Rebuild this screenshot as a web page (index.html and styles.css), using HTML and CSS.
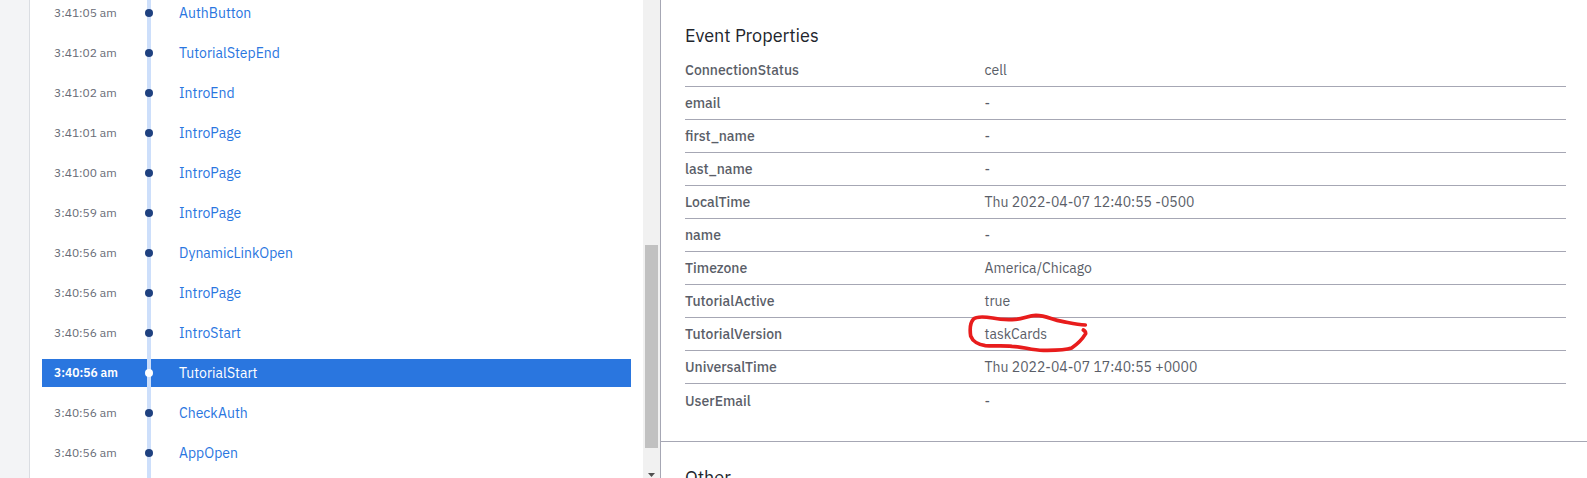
FILE: index.html
```html
<!DOCTYPE html>
<html lang="en">
<head>
<meta charset="utf-8">
<meta name="viewport" content="width=device-width, initial-scale=1">
<title>User activity</title>
<link rel="stylesheet" href="styles.css">
</head>
<body>
<div class="app">
  <div class="gutter"></div>

  <section class="stream" aria-label="Event stream">
    <ol class="events">
      <li class="event"><time class="event-time">3:41:05 am</time><span class="dot"></span><a class="event-name" href="#">AuthButton</a></li>
      <li class="event"><time class="event-time">3:41:02 am</time><span class="dot"></span><a class="event-name" href="#">TutorialStepEnd</a></li>
      <li class="event"><time class="event-time">3:41:02 am</time><span class="dot"></span><a class="event-name" href="#">IntroEnd</a></li>
      <li class="event"><time class="event-time">3:41:01 am</time><span class="dot"></span><a class="event-name" href="#">IntroPage</a></li>
      <li class="event"><time class="event-time">3:41:00 am</time><span class="dot"></span><a class="event-name" href="#">IntroPage</a></li>
      <li class="event"><time class="event-time">3:40:59 am</time><span class="dot"></span><a class="event-name" href="#">IntroPage</a></li>
      <li class="event"><time class="event-time">3:40:56 am</time><span class="dot"></span><a class="event-name" href="#">DynamicLinkOpen</a></li>
      <li class="event"><time class="event-time">3:40:56 am</time><span class="dot"></span><a class="event-name" href="#">IntroPage</a></li>
      <li class="event"><time class="event-time">3:40:56 am</time><span class="dot"></span><a class="event-name" href="#">IntroStart</a></li>
      <li class="event selected"><time class="event-time">3:40:56 am</time><span class="dot"></span><a class="event-name" href="#" aria-current="true">TutorialStart</a></li>
      <li class="event"><time class="event-time">3:40:56 am</time><span class="dot"></span><a class="event-name" href="#">CheckAuth</a></li>
      <li class="event"><time class="event-time">3:40:56 am</time><span class="dot"></span><a class="event-name" href="#">AppOpen</a></li>
    </ol>
    <div class="scrollbar" aria-hidden="true">
      <div class="track-before"></div>
      <div class="thumb"></div>
      <div class="track-after"></div>
      <svg class="arrow" viewBox="0 0 7 4"><path d="M0 0h7L3.5 4z" fill="#505050"/></svg>
    </div>
  </section>

  <main class="details">
    <section class="panel">
      <h2 class="panel-title">Event Properties</h2>
      <table class="props">
        <tbody>
          <tr><th scope="row">ConnectionStatus</th><td>cell</td></tr>
          <tr><th scope="row">email</th><td>-</td></tr>
          <tr><th scope="row">first_name</th><td>-</td></tr>
          <tr><th scope="row">last_name</th><td>-</td></tr>
          <tr><th scope="row">LocalTime</th><td>Thu 2022-04-07 12:40:55 -0500</td></tr>
          <tr><th scope="row">name</th><td>-</td></tr>
          <tr><th scope="row">Timezone</th><td>America/Chicago</td></tr>
          <tr><th scope="row">TutorialActive</th><td>true</td></tr>
          <tr><th scope="row">TutorialVersion</th><td class="marked">taskCards<svg class="scribble" viewBox="81 66 369 129" aria-hidden="true"><path d="M436 105C410 104 388 98 366 94C336 89 318 76 288 76C264 77 250 88 226 88C198 90 178 88 158 84C138 81 110 77 100 88C90 99 90 124 92 138C98 154 116 165 136 167C162 169 190 166 216 169C250 170 274 181 310 181C340 181 372 182 395 174C410 164 428 146 437 131C437 125 434 122 430 120" fill="none" stroke="#e81c1c" stroke-width="11" stroke-linecap="round" stroke-linejoin="round"/></svg></td></tr>
          <tr><th scope="row">UniversalTime</th><td>Thu 2022-04-07 17:40:55 +0000</td></tr>
          <tr><th scope="row">UserEmail</th><td>-</td></tr>
        </tbody>
      </table>
    </section>
    <section class="panel">
      <h2 class="panel-title">Other</h2>
    </section>
  </main>
</div>
</body>
</html>
```
FILE: styles.css
```css
* {
  box-sizing: border-box;
}

body {
  margin: 0;
  background: #fff;
  color: #5a5e68;
  font-family: "IBM Plex Sans", Roboto, "Liberation Sans", sans-serif;
  font-size: 14px;
  line-height: 20px;
}

.app {
  display: grid;
  grid-template-columns: 30px 630fr 927fr;
  height: 100vh;
  overflow: hidden;
}

.gutter {
  background: #f3f4f6;
  border-right: 1px solid #dadde2;
}

.stream {
  display: flex;
  min-width: 0;
  overflow: hidden;
}

.events {
  position: relative;
  flex: 1;
  align-self: flex-start;
  display: flex;
  flex-direction: column;
  gap: 12px;
  margin: -1px 12px 0;
  padding: 0 0 12px;
  list-style: none;
}

.events::before {
  content: "";
  position: absolute;
  top: 0;
  bottom: 0;
  left: 105px;
  width: 4px;
  background: #cddffb;
}

.event {
  display: grid;
  grid-template-columns: 91px 8px 1fr;
  align-items: center;
  height: 28px;
  padding: 0 12px;
}

.event-time {
  font-size: 12px;
  color: #676b76;
}

.dot {
  z-index: 1;
  width: 8px;
  height: 8px;
  border-radius: 50%;
  background: #1f4180;
}

.event-name {
  padding-left: 26px;
  color: #2a76df;
  text-decoration: none;
}

.selected {
  background: #2a76df;
}

.selected .event-time {
  color: #fff;
  font-weight: 600;
}

.selected .event-name {
  color: #fff;
}

.selected .dot {
  background: #fff;
}

.scrollbar {
  display: flex;
  flex-direction: column;
  width: 17px;
  padding: 0 2px 1px;
  background: #f1f1f1;
}

.track-before {
  flex: 245;
}

.thumb {
  flex: 203;
  background: #c1c1c1;
}

.track-after {
  flex: 25;
}

.arrow {
  align-self: center;
  width: 7px;
  height: 4px;
}

.details {
  min-width: 0;
  overflow: hidden;
  border-left: 1px solid #a6a7b4;
}

.panel {
  padding: 24px 21px 24px 24px;
}

.panel + .panel {
  border-top: 1px solid #a6a7b4;
}

.panel-title {
  margin: 0 0 6px;
  color: #22252c;
  font-size: 18px;
  font-weight: 400;
  line-height: 24px;
}

.props {
  width: 100%;
  border-collapse: separate;
  border-spacing: 0;
  table-layout: fixed;
}

.props th,
.props td {
  height: 33px;
  padding: 0;
  border-bottom: 1px solid #a6a7b4;
  text-align: left;
}

.props th {
  width: 34%;
  font-weight: 500;
}

.props tr:last-child > * {
  border-bottom: 0;
}

.marked {
  position: relative;
}

.scribble {
  position: absolute;
  top: -6px;
  left: -18px;
  width: 123px;
  height: 43px;
}
```
